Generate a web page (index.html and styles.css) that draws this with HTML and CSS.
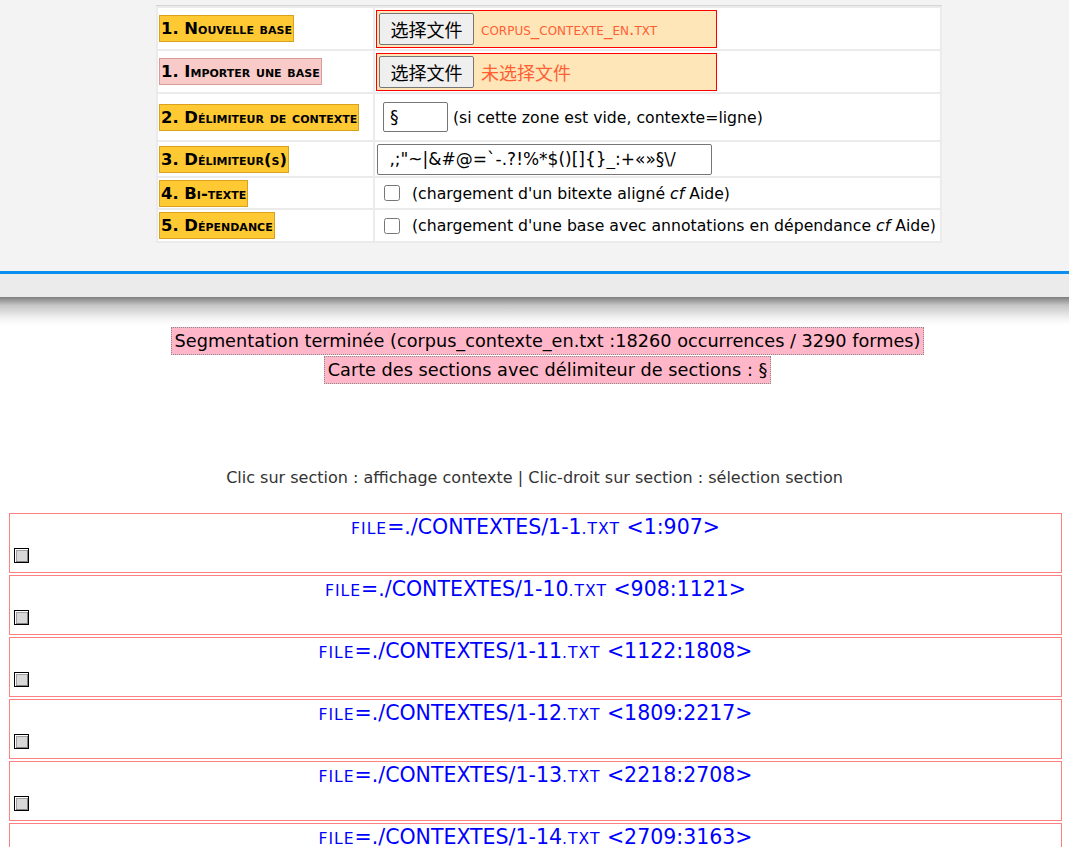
FILE: index.html
```html
<!DOCTYPE html>
<html lang="fr">
<head>
  <meta charset="UTF-8" />
  <title>Segmentation</title>
  <link rel="stylesheet" href="styles.css">
</head>
<body>

  <!-- Formulaire de chargement -->
  <div class="panel">
    <table class="params">
      <tr>
        <td class="lbl"><span class="tag">1. Nouvelle base</span></td>
        <td>
          <div class="filebox">
            <span class="filebtn">选择文件</span>
            <span class="fname small">corpus_contexte_en.txt</span>
          </div>
        </td>
      </tr>
      <tr>
        <td class="lbl"><span class="tag pink">1. Importer une base</span></td>
        <td>
          <div class="filebox">
            <span class="filebtn">选择文件</span>
            <span class="fname">未选择文件</span>
          </div>
        </td>
      </tr>
      <tr class="r3">
        <td class="lbl"><span class="tag">2. Délimiteur de contexte</span></td>
        <td><input type="text" class="delim-ctx" value="§" /> <span class="note">(si cette zone est vide, contexte=ligne)</span></td>
      </tr>
      <tr class="r4">
        <td class="lbl"><span class="tag">3. Délimiteur(s)</span></td>
        <td><input type="text" class="delims" value=" ,;&quot;~|&amp;#@=`-.?!%*$()[]{}_:+«»§\/" /></td>
      </tr>
      <tr class="r5">
        <td class="lbl"><span class="tag">4. Bi-texte</span></td>
        <td><label class="chk"><input type="checkbox" /> <span class="note">(chargement d'un bitexte aligné <i>cf</i> Aide)</span></label></td>
      </tr>
      <tr class="r6">
        <td class="lbl"><span class="tag">5. Dépendance</span></td>
        <td><label class="chk"><input type="checkbox" /> <span class="note">(chargement d'une base avec annotations en dépendance <i>cf</i> Aide)</span></label></td>
      </tr>
    </table>
  </div>
  <div class="bar"></div>
  <div class="shadow"></div>

  <!-- Resultats -->
  <div class="msgs">
    <span class="msg">Segmentation terminée (corpus_contexte_en.txt :18260 occurrences / 3290 formes)</span><br>
    <span class="msg">Carte des sections avec délimiteur de sections : §</span>
  </div>

  <p class="hint">Clic sur section : affichage contexte | Clic-droit sur section : sélection section</p>

  <div class="sections">
    <div class="section">
      <div class="stitle"><span class="sc">file</span>=./CONTEXTES/1-1<span class="sc">.txt</span> &lt;1:907&gt;</div>
      <span class="box"></span>
    </div>
    <div class="section">
      <div class="stitle"><span class="sc">file</span>=./CONTEXTES/1-10<span class="sc">.txt</span> &lt;908:1121&gt;</div>
      <span class="box"></span>
    </div>
    <div class="section">
      <div class="stitle"><span class="sc">file</span>=./CONTEXTES/1-11<span class="sc">.txt</span> &lt;1122:1808&gt;</div>
      <span class="box"></span>
    </div>
    <div class="section">
      <div class="stitle"><span class="sc">file</span>=./CONTEXTES/1-12<span class="sc">.txt</span> &lt;1809:2217&gt;</div>
      <span class="box"></span>
    </div>
    <div class="section">
      <div class="stitle"><span class="sc">file</span>=./CONTEXTES/1-13<span class="sc">.txt</span> &lt;2218:2708&gt;</div>
      <span class="box"></span>
    </div>
    <div class="section">
      <div class="stitle"><span class="sc">file</span>=./CONTEXTES/1-14<span class="sc">.txt</span> &lt;2709:3163&gt;</div>
      <span class="box"></span>
    </div>
  </div>

</body>
</html>
```

FILE: styles.css
```css
body {
  margin: 0;
  font-family: "DejaVu Sans", Verdana, "Noto Sans CJK SC", sans-serif;
  color: #000;
  background: #fff;
}

.panel {
  background: #f3f3f3;
  height: 271px;
  padding-top: 5px;
  box-sizing: border-box;
}

.params {
  margin-left: 156px;
  width: 786px;
  border-collapse: separate;
  border-spacing: 2px;
  background: #ebebeb;
  border-top: 1px solid #d4d4d4;
}

.params td {
  background: #fff;
  padding: 0;
  height: 41px;
  font-size: 15.7px;
  white-space: nowrap;
}

.params td.lbl {
  width: 214px;
  padding-left: 1px;
}

.params .r3 td { height: 46px; }
.params .r4 td { height: 34px; }
.params .r5 td { height: 30px; }
.params .r6 td { height: 31px; }

.tag {
  display: inline-block;
  background: #ffc933;
  border: 1px solid #d8a21e;
  font-weight: bold;
  font-variant: small-caps;
  font-size: 16.4px;
  line-height: 25px;
  padding: 0 1px;
}

.tag.pink {
  background: #f8cbc8;
  border-color: #d49b98;
}

.filebox {
  display: flex;
  align-items: center;
  width: 339px;
  height: 36px;
  margin-left: 1px;
  border: 1px solid #f00;
  background: #ffe6b8;
}

.filebtn {
  display: inline-block;
  margin-left: 2px;
  width: 93px;
  height: 30px;
  line-height: 30px;
  text-align: center;
  font-family: "Noto Sans CJK SC", sans-serif;
  font-size: 18px;
  background: #efefef;
  border: 1px solid #767676;
  border-radius: 2px;
}

.fname {
  margin-left: 7px;
  color: #ff5e33;
  font-family: "Noto Sans CJK SC", sans-serif;
  font-size: 18px;
}

.fname.small {
  font-family: "DejaVu Sans", sans-serif;
  font-size: 17px;
  font-variant: small-caps;
}

input[type="text"] {
  font-family: inherit;
  font-size: 17px;
  border: 1px solid #767676;
  border-radius: 2px;
  padding: 0 6px;
  box-sizing: border-box;
  vertical-align: middle;
}

.delim-ctx {
  width: 65px;
  height: 30px;
  margin-left: 8px;
}

.delims {
  width: 335px;
  height: 31px;
  margin-left: 2px;
}

.note {
  vertical-align: middle;
}

.chk {
  display: flex;
  align-items: center;
}

.chk input {
  width: 16px;
  height: 16px;
  margin: 0 12px 0 9px;
}

.bar {
  height: 3px;
  background: #0a8eef;
}

.shadow {
  height: 23px;
  background: #ebebeb;
  border-bottom: 28px solid transparent;
  position: relative;
}

.shadow::after {
  content: "";
  position: absolute;
  left: 0;
  right: 0;
  top: 23px;
  height: 28px;
  background: linear-gradient(#7f7f7f, #c6c6c6 30%, #f2f2f2 75%, #fff);
}

.msgs {
  text-align: center;
  font-size: 17.7px;
  line-height: 29px;
  margin-top: 2px;
  padding-left: 26px;
}

.msg {
  background: #ffb6c8;
  border: 1px dotted #888;
  padding: 3px 3px;
}

.hint {
  text-align: center;
  font-size: 16px;
  color: #333;
  margin: 83px 0 26px;
}

.sections {
  margin: 0 7px 0 9px;
}

.section {
  border: 1px solid #ff8080;
  height: 58px;
  margin-bottom: 2px;
  padding: 0 4px;
}

.stitle {
  text-align: center;
  color: #0000ff;
  font-size: 20.5px;
  line-height: 27px;
}

.sc {
  text-transform: uppercase;
  font-size: 0.76em;
  letter-spacing: 1px;
}

.box {
  display: block;
  width: 13px;
  height: 13px;
  margin-top: 5px;
  border: 1px solid #000;
  background: #d8d8d8;
  box-shadow: inset 1px 1px 0 #fff, inset -1px -1px 0 #808080, inset 2px 2px 0 #a0a0a0;
}
```
